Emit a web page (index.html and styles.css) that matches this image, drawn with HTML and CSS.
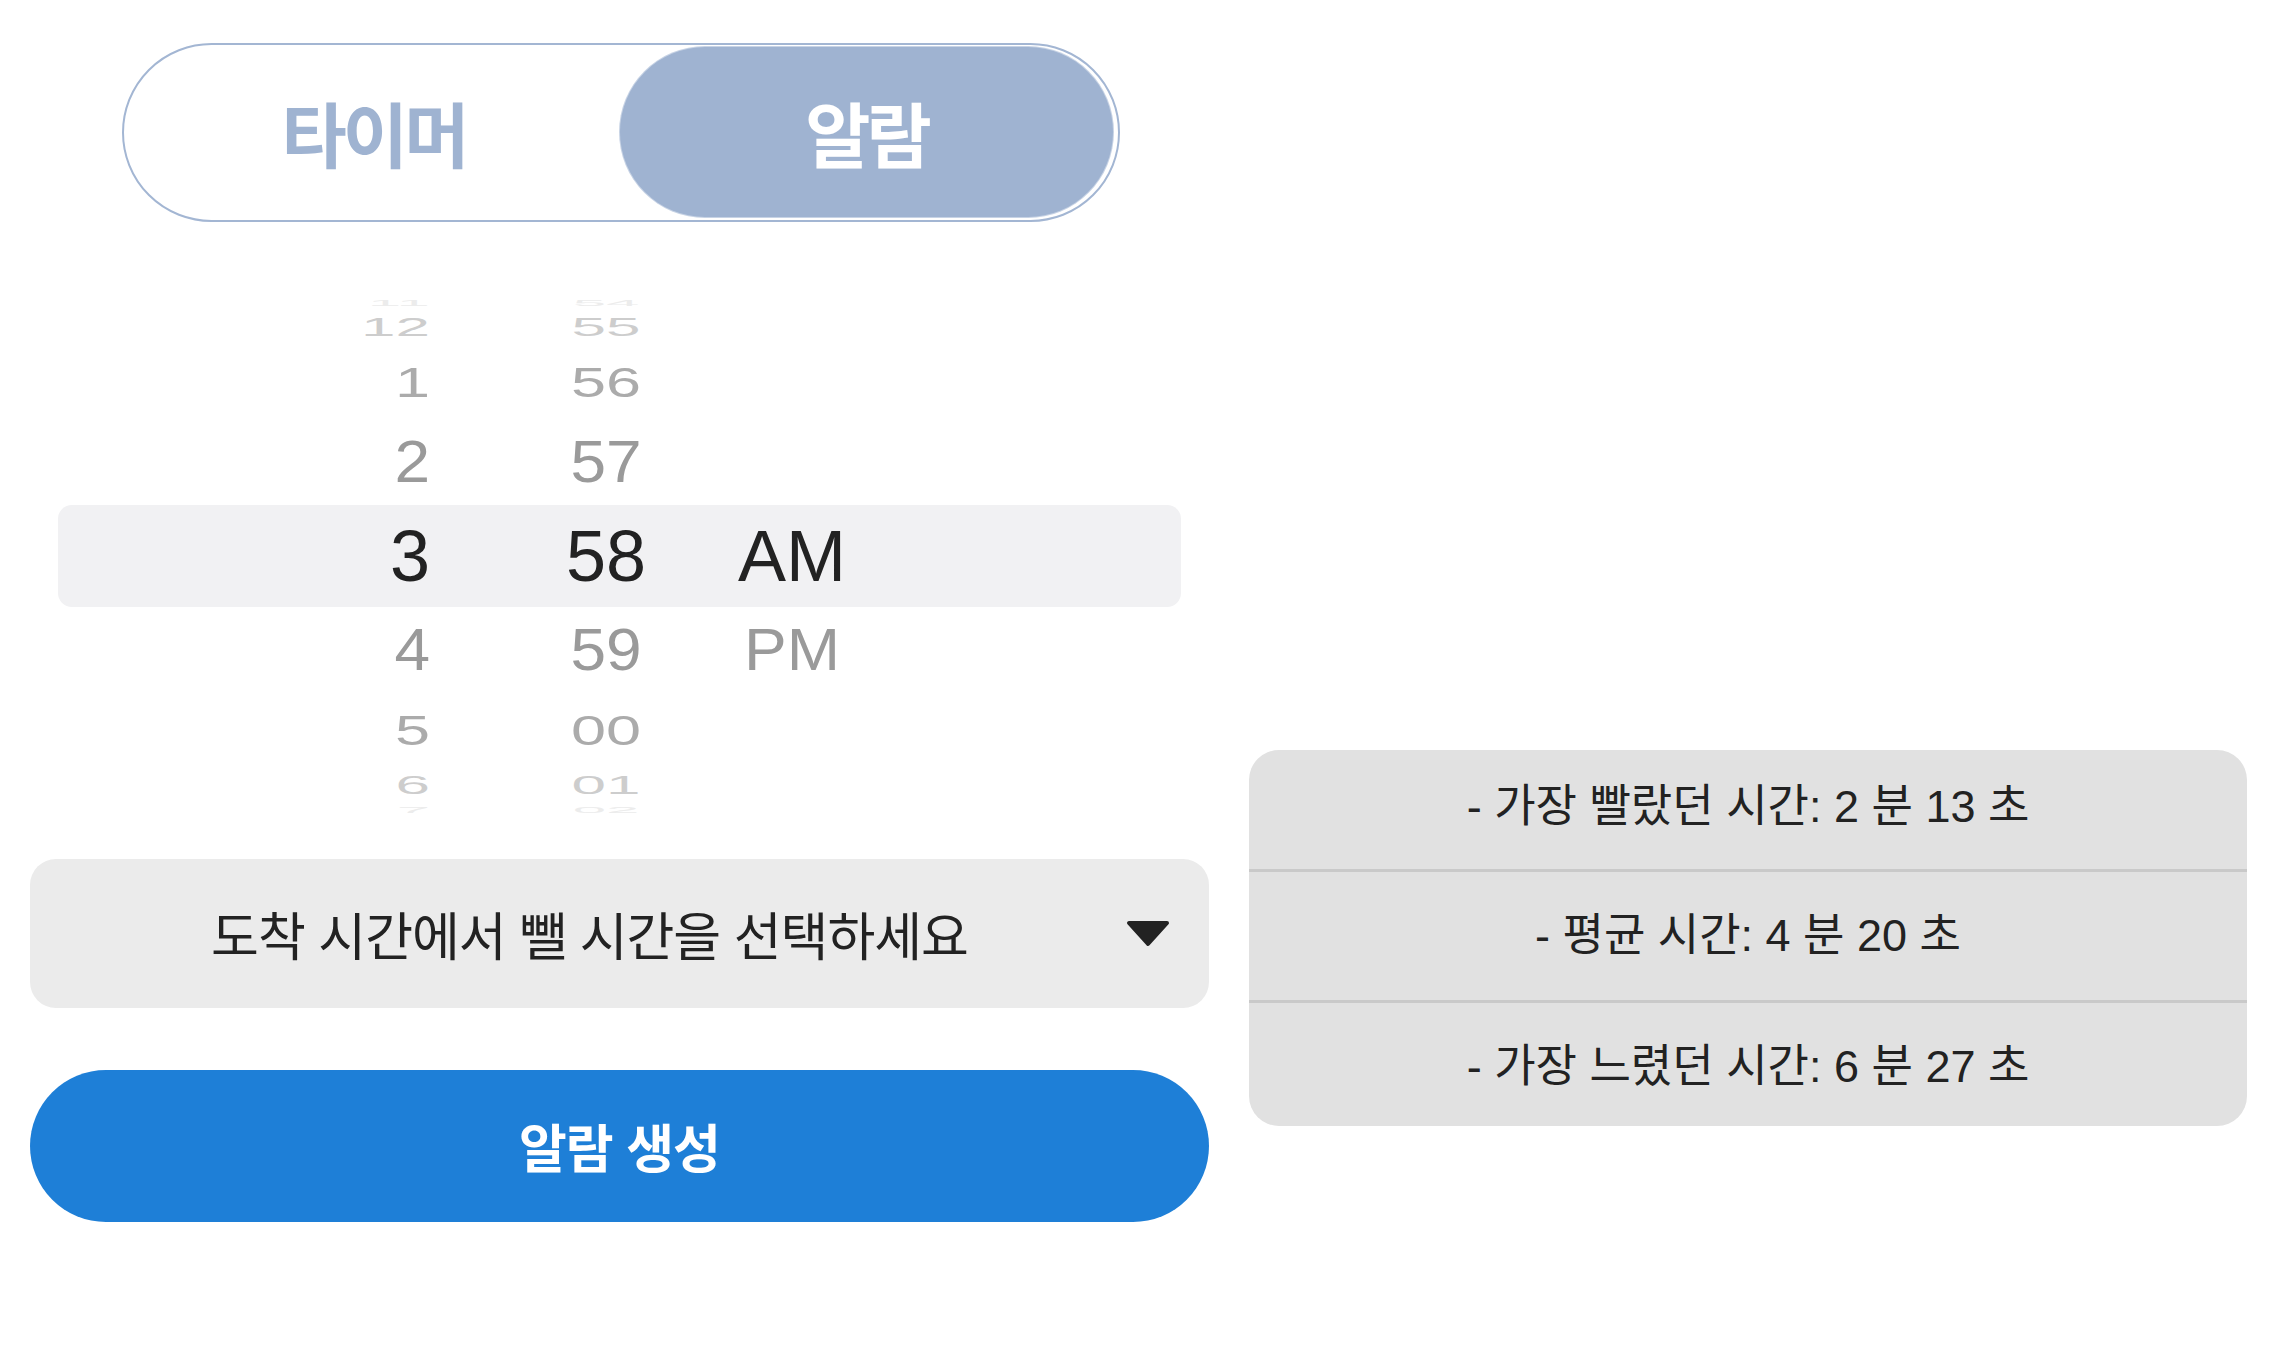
FILE: index.html
```html
<!DOCTYPE html>
<html lang="ko">
<head>
<meta charset="utf-8">
<title>알람</title>
<link rel="stylesheet" href="styles.css">
</head>
<body>
<div class="page">
  <div class="left">
    <div class="toggle">
      <div class="seg">타이머</div>
      <div class="seg active">알람</div>
    </div>

    <div class="picker">
      <div class="prow r4"><span class="h">11</span><span class="m">54</span><span class="p"></span></div>
      <div class="prow r3"><span class="h">12</span><span class="m">55</span><span class="p"></span></div>
      <div class="prow r2"><span class="h">1</span><span class="m">56</span><span class="p"></span></div>
      <div class="prow r1"><span class="h">2</span><span class="m">57</span><span class="p"></span></div>
      <div class="prow r0 sel"><span class="h">3</span><span class="m">58</span><span class="p">AM</span></div>
      <div class="prow r1"><span class="h">4</span><span class="m">59</span><span class="p">PM</span></div>
      <div class="prow r2"><span class="h">5</span><span class="m">00</span><span class="p"></span></div>
      <div class="prow r3"><span class="h">6</span><span class="m">01</span><span class="p"></span></div>
      <div class="prow r4"><span class="h">7</span><span class="m">02</span><span class="p"></span></div>
    </div>

    <div class="dropdown">
      <span class="dd-text">도착 시간에서 뺄 시간을 선택하세요</span>
      <svg class="dd-caret" width="46" height="27" viewBox="0 0 46 27"><path d="M4 3 H42 L23 24 Z" fill="#222" stroke="#222" stroke-width="4" stroke-linejoin="round"/></svg>
    </div>

    <div class="create-btn">알람 생성</div>
  </div>

  <div class="stats">
    <div class="stat">- 가장 빨랐던 시간: 2 분 13 초</div>
    <div class="stat">- 평균 시간: 4 분 20 초</div>
    <div class="stat">- 가장 느렸던 시간: 6 분 27 초</div>
  </div>
</div>
</body>
</html>
```

FILE: styles.css
```css
* { box-sizing: border-box; }

html, body {
  margin: 0;
  padding: 0;
  background: #ffffff;
}

body {
  font-family: "Noto Sans CJK KR", sans-serif;
  color: #222;
}

.page {
  display: flex;
  align-items: flex-start;
  gap: 40px;
  padding: 43px 0 0 30px;
}

.left {
  width: 1179px;
  display: flex;
  flex-direction: column;
}

/* ---------- toggle ---------- */
.toggle {
  width: 998px;
  height: 179px;
  margin-left: 92px;
  border: 2px solid #a3b6d3;
  border-radius: 90px;
  padding: 2px 5px 3px 3px;
  display: grid;
  grid-template-columns: 1fr 1fr;
}

.seg {
  display: flex;
  align-items: center;
  justify-content: center;
  border-radius: 90px;
  font-family: "Noto Sans CJK KR", sans-serif;
  font-weight: 700;
  font-size: 71px;
  color: #9fb3d1;
  letter-spacing: -4px;
  padding-bottom: 2px;
}

.seg.active {
  background: #9fb3d1;
  color: #ffffff;
  box-shadow: 0 0 0 1px #c7d3e5;
}

/* ---------- picker ---------- */
.picker {
  margin-top: 74px;
  height: 520px;
  overflow: hidden;
  display: flex;
  flex-direction: column;
}

.prow {
  flex: none;
  margin: 0 28px;
  display: grid;
  grid-template-columns: 372px 83px 186px 186px 1fr;
  grid-template-rows: minmax(0, 1fr);
  align-items: center;
  font-family: "Liberation Sans", "Helvetica", sans-serif;
  line-height: 1;
}

.prow span {
  display: block;
  white-space: nowrap;
  align-self: unsafe center;
}

.prow .h { grid-column: 1; text-align: right; }
.prow .m { grid-column: 3; text-align: center; }
.prow .p { grid-column: 4; text-align: center; }

.r4 { height: 13px; font-size: 60px; color: #ececec; }
.r3 { height: 36px; font-size: 62px; color: #cdcdcd; }
.r2 { height: 74px; font-size: 63px; color: #ababab; }
.r1 { height: 86px; font-size: 64px; color: #9a9a9a; }
.r0 { height: 102px; font-size: 72px; color: #222222; }

.r4 span { transform: scaleY(0.15); }
.r3 span { transform: scaleY(0.42); }
.r2 span { transform: scaleY(0.68); }
.r1 span { transform: scaleY(0.92); }

.sel {
  background: #f1f1f3;
  border-radius: 14px;
}

/* ---------- dropdown ---------- */
.dropdown {
  margin-top: 43px;
  height: 149px;
  background: #ebebeb;
  border-radius: 26px;
  display: flex;
  align-items: center;
  padding-left: 24px;
  padding-right: 38px;
}

.dd-text {
  flex: 1;
  text-align: center;
  font-size: 52px;
  font-weight: 400;
  color: #222;
  letter-spacing: -1px;
}

.dd-caret {
  flex: none;
  display: block;
}

/* ---------- button ---------- */
.create-btn {
  margin-top: 62px;
  height: 152px;
  border-radius: 76px;
  background: #1e7fd7;
  color: #ffffff;
  display: flex;
  align-items: center;
  justify-content: center;
  font-size: 52px;
  font-weight: 700;
  letter-spacing: -1px;
  padding-bottom: 2px;
}

/* ---------- stats ---------- */
.stats {
  margin-top: 707px;
  width: 998px;
  background: #e1e1e1;
  border-radius: 30px;
  overflow: hidden;
}

.stat {
  display: flex;
  align-items: center;
  justify-content: center;
  font-family: "Liberation Sans", "Noto Sans CJK KR", sans-serif;
  font-size: 45px;
  color: #222;
}

.stat:nth-child(1) { height: 119px; padding-bottom: 14px; }
.stat:nth-child(2) { height: 131px; padding-bottom: 10px; }
.stat:nth-child(3) { height: 126px; padding-bottom: 4px; }

.stat + .stat {
  border-top: 3px solid #c9c9c9;
}
```
